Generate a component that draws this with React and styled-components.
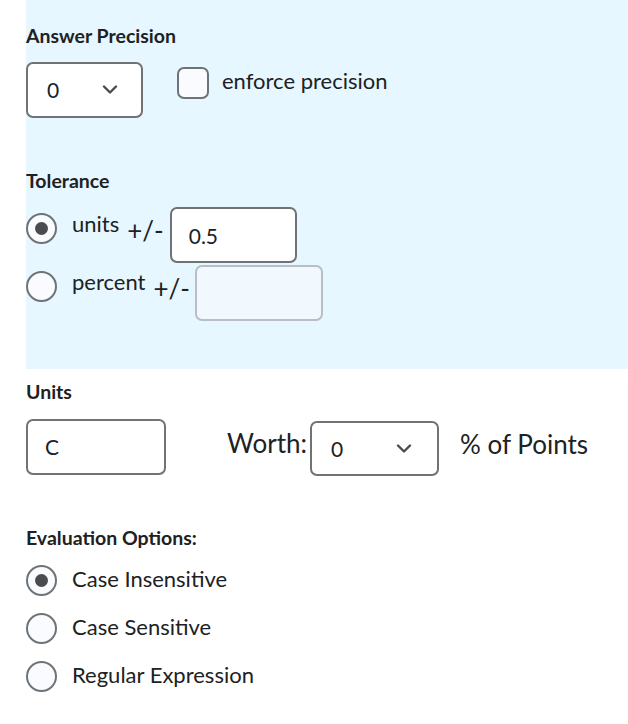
import React from 'react';
import styled, { createGlobalStyle } from 'styled-components';

const GlobalStyle = createGlobalStyle`
    body {
        margin: 0;
        background: #fff;
        font-family: Lato, "Noto Sans", sans-serif;
        color: #202122;
    }
`;

const Page = styled.div`
    width: 628px;
    height: 724px;
    overflow: hidden;
    padding-left: 26px;
    box-sizing: border-box;
`;

const Panel = styled.div`
    background: #e6f7ff;
    height: 369px;
    padding-top: 26px;
    box-sizing: border-box;
`;

const Heading = styled.div`
    font-size: 19.5px;
    font-weight: 700;
    line-height: 1;
    margin-top: ${p => p.$top || 0}px;
`;

const Row = styled.div`
    display: flex;
    align-items: flex-start;
    margin-top: ${p => p.$top || 0}px;
`;

const Select = styled.div`
    width: ${p => p.$width}px;
    height: ${p => p.$height || 56}px;
    box-sizing: border-box;
    border: 2px solid #6e7376;
    border-radius: 7px;
    background: #fff;
    display: flex;
    align-items: center;
    justify-content: space-between;
    padding: 0 ${p => p.$right || 23}px 0 19px;
    font-size: 21px;
    flex-shrink: 0;
    margin-left: ${p => p.$left || 0}px;
    margin-top: ${p => p.$top || 0}px;
`;

const Box = styled.div`
    width: 32px;
    height: 32px;
    box-sizing: border-box;
    border: 2px solid #6e7376;
    border-radius: 7px;
    background: #f9fbff;
    margin: 5px 0 0 34px;
    flex-shrink: 0;
`;

const Text = styled.span`
    font-size: ${p => p.$size || 22}px;
    line-height: 1;
    margin-left: ${p => p.$left || 0}px;
    margin-top: ${p => p.$top || 0}px;
    white-space: nowrap;
`;

const Radio = styled.div`
    width: 31px;
    height: 31px;
    box-sizing: border-box;
    border-radius: 50%;
    border: 2px solid #6e7376;
    background: #f9fbff;
    display: flex;
    align-items: center;
    justify-content: center;
    flex-shrink: 0;
    margin-top: ${p => p.$top || 0}px;

    &::after {
        content: '';
        display: ${p => (p.$checked ? 'block' : 'none')};
        width: 13px;
        height: 13px;
        border-radius: 50%;
        background: #494c4e;
    }
`;

const Input = styled.div`
    width: ${p => p.$width}px;
    height: 56px;
    box-sizing: border-box;
    border: 2px solid ${p => (p.$disabled ? '#b7bfc4' : '#6e7376')};
    border-radius: 7px;
    background: ${p => (p.$disabled ? '#f1f9fe' : '#fff')};
    display: flex;
    align-items: center;
    padding-left: 17px;
    font-size: 21px;
    flex-shrink: 0;
    margin-left: ${p => p.$left || 0}px;
`;

const Option = styled.div`
    display: flex;
    align-items: flex-start;
    margin-top: ${p => p.$top || 0}px;
`;

const Chevron = () => (
    <svg width="16" height="9" viewBox="0 0 16 9">
        <path d="M2 1.5l6 6 6-6" fill="none" stroke="#494c4e" strokeWidth="2.4" strokeLinecap="round" strokeLinejoin="round" />
    </svg>
);

export default function App() {
    return (
        <Page>
            <GlobalStyle />
            <Panel>
                <Heading>Answer Precision</Heading>
                <Row $top={16}>
                    <Select $width={117}>
                        <span>0</span>
                        <Chevron />
                    </Select>
                    <Box />
                    <Text $left={13} $top={8}>enforce precision</Text>
                </Row>
                <Heading $top={53}>Tolerance</Heading>
                <Row $top={17}>
                    <Radio $checked $top={6} />
                    <Text $left={15} $top={6}>units</Text>
                    <Text $size={26} $left={8} $top={10}>+/-</Text>
                    <Input $width={127} $left={6}>0.5</Input>
                </Row>
                <Row $top={2}>
                    <Radio $top={6} />
                    <Text $left={15} $top={6}>percent</Text>
                    <Text $size={26} $left={8} $top={10}>+/-</Text>
                    <Input $width={128} $left={5} $disabled />
                </Row>
            </Panel>
            <Heading $top={13}>Units</Heading>
            <Row $top={17}>
                <Input $width={140}>C</Input>
                <Text $size={26} $left={61} $top={11}>Worth:</Text>
                <Select $width={129} $height={55} $left={3} $top={2} $right={25}>
                    <span>0</span>
                    <Chevron />
                </Select>
                <Text $size={26} $left={21} $top={12}>% of Points</Text>
            </Row>
            <Heading $top={52}>Evaluation Options:</Heading>
            <Option $top={18}>
                <Radio $checked />
                <Text $left={15} $top={3}>Case Insensitive</Text>
            </Option>
            <Option $top={17}>
                <Radio />
                <Text $left={15} $top={3}>Case Sensitive</Text>
            </Option>
            <Option $top={17}>
                <Radio />
                <Text $left={15} $top={3}>Regular Expression</Text>
            </Option>
        </Page>
    );
}
